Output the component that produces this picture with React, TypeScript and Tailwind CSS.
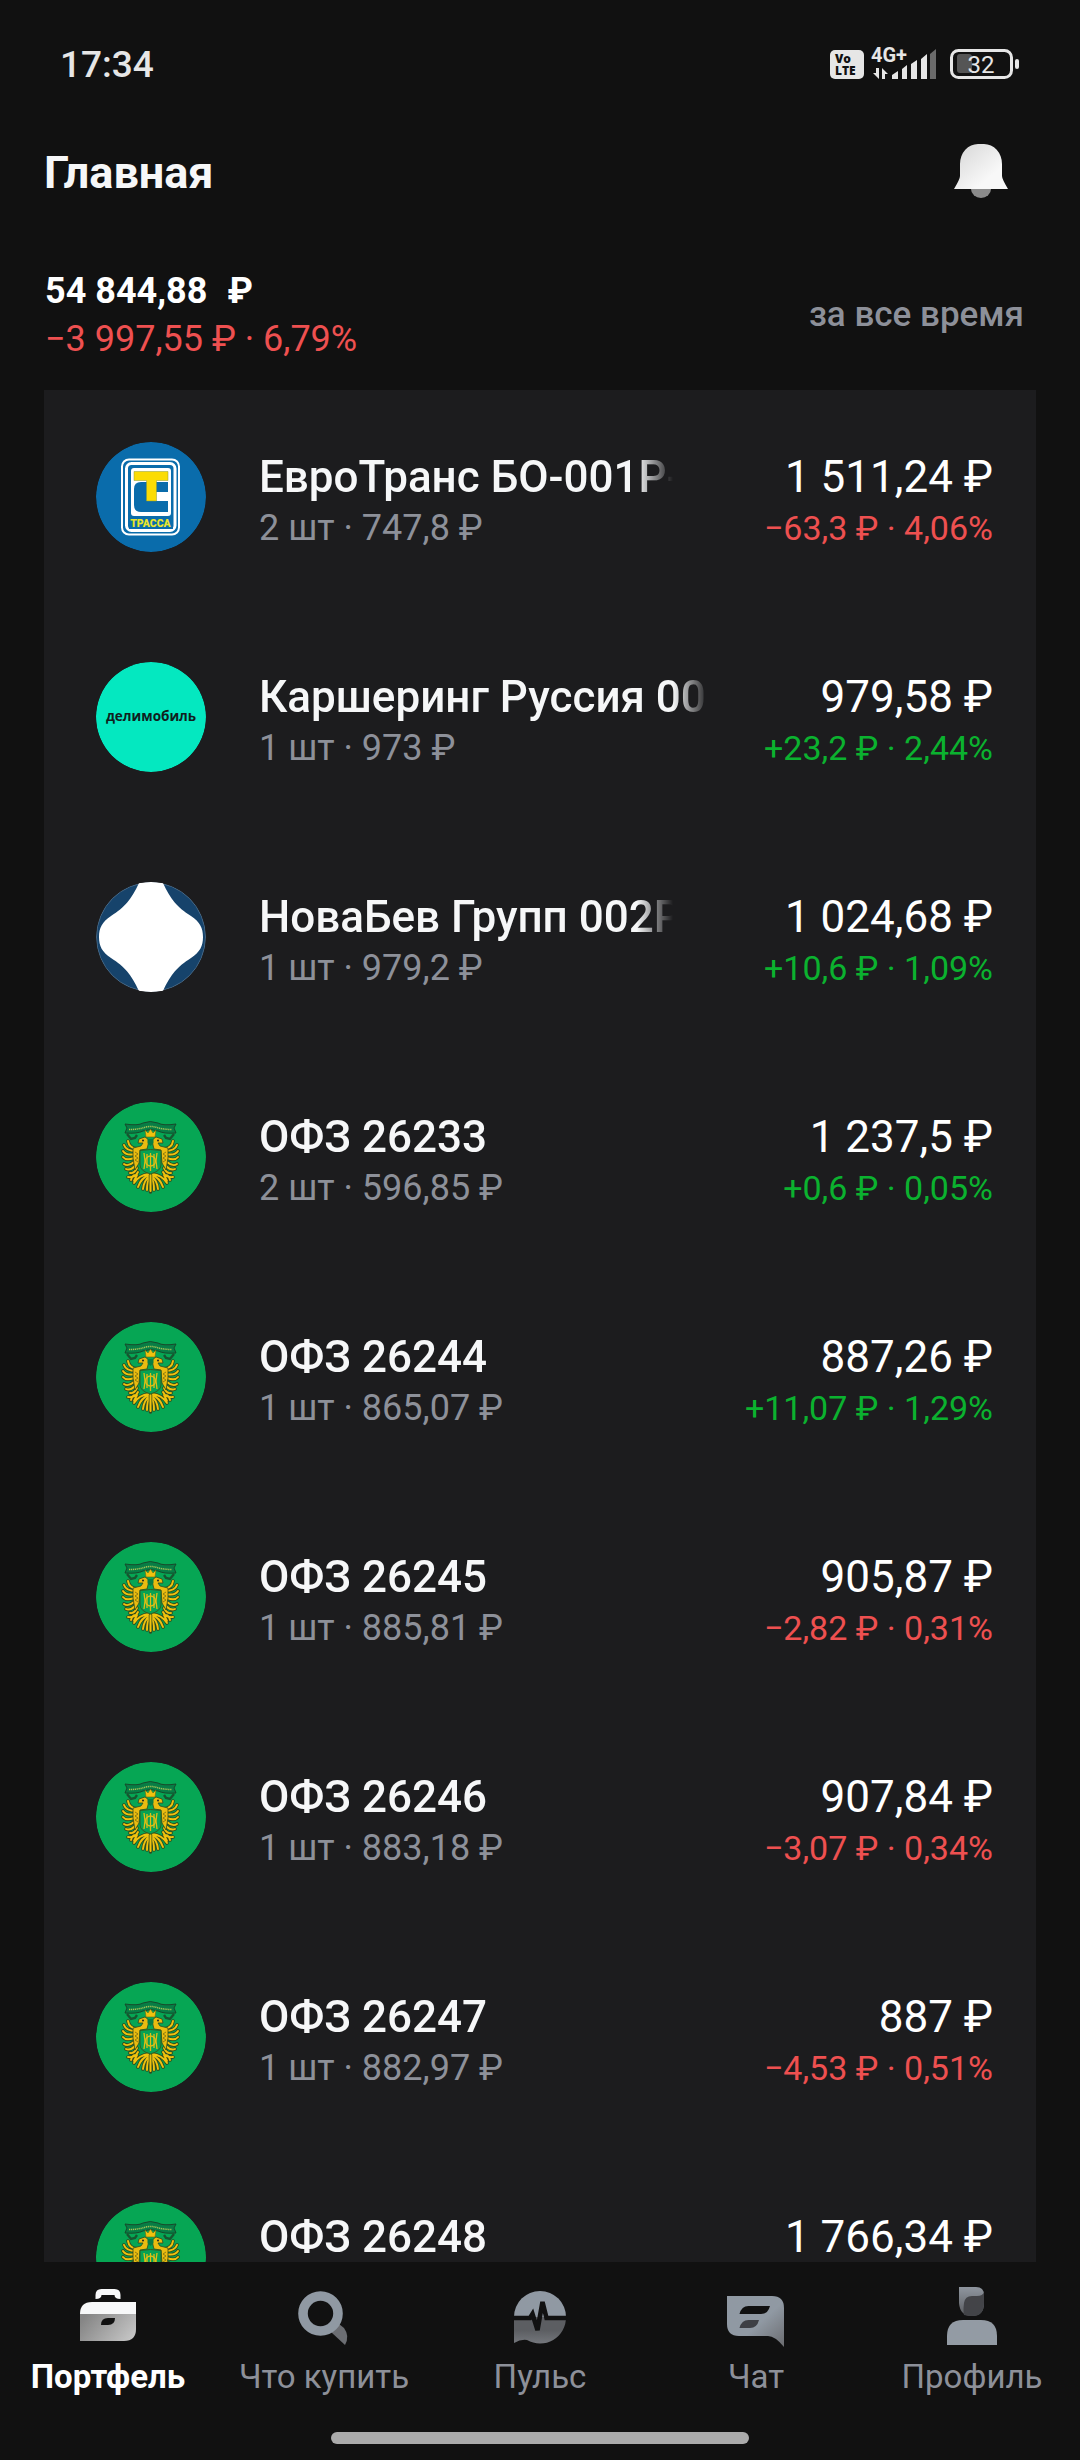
import type { ReactNode } from "react"

type Holding = {
    name: string
    info: string
    value: string
    change: string
    up: boolean
    logo: ReactNode
}

const TrassaLogo = () => (
    <svg viewBox="0 0 110 110" className="size-full">
        <circle cx="55" cy="55" r="55" fill="#0a6cab" />
        <rect x="26" y="17.5" width="57" height="75" rx="7" fill="none" stroke="#fff" strokeWidth="2" />
        <rect x="30.5" y="21.5" width="48.5" height="67" rx="5" fill="none" stroke="#fff" strokeWidth="3" />
        <rect x="35" y="26" width="40" height="48" rx="3" fill="#fff" />
        <path d="M72 40H45q-7 0-7 7v16q0 7 7 7h27V59H51v-8h21z" fill="#0a6cab" />
        <path d="M59 50h13v9H59z" fill="#fff" />
        <path d="M38 29.5h34v9H60.5V59h-10V38.5H38z" fill="#fbdc04" stroke="#8a9a3a" strokeWidth="0.5" />
        <rect x="33" y="75" width="44" height="12" fill="#0a6cab" />
        <text x="54.5" y="85" textAnchor="middle" fontFamily="Roboto, sans-serif" fontSize="10.5" fontWeight="900" fill="#e9e52c">ТРАССА</text>
    </svg>
)

const DelimobilLogo = () => (
    <svg viewBox="0 0 110 110" className="size-full">
        <circle cx="55" cy="55" r="55" fill="#04e8c0" />
        <text x="55" y="59" textAnchor="middle" fontFamily="Open Sans, sans-serif" fontSize="13.5" fontWeight="700" fill="#10201d">делимобиль</text>
    </svg>
)

const NovabevLogo = () => (
    <svg viewBox="0 0 110 110" className="size-full">
        <circle cx="55" cy="55" r="54.5" fill="#16436b" stroke="#5c7c99" strokeWidth="0.7" />
        <path d="M43 1q12-2 24 0c8 17 14 24 28 33 9 6 12 12 12 21s-3 15-12 21c-14 9-20 16-28 33q-12 2-24 0c-8-17-14-24-28-33C6 70 3 64 3 55s3-15 12-21C29 25 35 18 43 1z" fill="#fff" />
    </svg>
)

const feathers = "M41 47q-8-1-9-8M40 49q-10 0-12-6M39 52q-9 2-12-3M38 56q-8 3-11-1M38 60q-6 5-10 2M39 64q-5 5-9 3M41 66q-3 6-7 5"
const claws = "M42 70q-3 6-10 5M41 73q-2 4-3 6M40 73q-4 0-5 5"
const tail = "M53 72q-10 1-15 9M53 73q-8 3-11 12M54 74q-6 4-7 13M54 75q-3 4-3 13"

// one half of the eagle, mirrored for the other side
const EagleHalf = () => (
    <g>
        <path d={feathers + claws + tail} fill="none" stroke="#2f4a1e" strokeWidth="3.6" strokeLinecap="round" />
        <path d={feathers + claws + tail} fill="none" stroke="#f0c20d" strokeWidth="1.9" strokeLinecap="round" />
        <path d="M37 46l8-2 2-3-5 0 1-4 6-2 4 3-1 5-1 4-7 1-1 13-4 7-2-12z" fill="#eabb10" stroke="#2f4a1e" strokeWidth="0.8" />
        <path d="M39 50l3 2-3 2 3 2-3 2 3 2" fill="none" stroke="#7a6d12" strokeWidth="0.8" />
        <circle cx="47" cy="38.5" r="1" fill="#222" />
    </g>
)

const MinfinLogo = () => (
    <svg viewBox="0 0 110 110" className="size-full">
        <circle cx="55" cy="55" r="55" fill="#06a654" />
        <EagleHalf />
        <g transform="translate(109 0) scale(-1 1)"><EagleHalf /></g>
        <path d="M54.5 73v17" stroke="#2f4a1e" strokeWidth="3.5" strokeLinecap="round" />
        <path d="M54.5 73v16" stroke="#f0c20d" strokeWidth="2" strokeLinecap="round" />
        <path d="M44 48.5q10.5-2 21 0V63q0 6-10.500 9Q44 69 44 63z" fill="#07a253" stroke="#335c20" />
        <path d="M48 51l1 8-1 8M51 52v14M58 52v14M61 51l-1 8 1 8M54.5 51v18" fill="none" stroke="#e0be14" strokeWidth="1.3" />
        <circle cx="54.5" cy="59" r="5" fill="none" stroke="#e0be14" strokeWidth="1.3" />
        <path d="M31 32l4 5 4-1 2-3M78 32l-4 5-4-1-2-3" fill="none" stroke="#17562f" strokeWidth="2.4" />
        <path d="M29 22q13 2 18-1 7-3 15 0 5 3 18 1l-2 4 2 5q-12 1-18-2-7-3-15 0-6 3-18 2l2-5z" fill="#087d45" stroke="#174a2b" />
        <path d="M33 27.5q9 0 15-2 6.500-2 13 0 6 2 15 2" fill="none" stroke="#a8c255" strokeWidth="1.5" strokeDasharray="1.2 0.7" />
        <path d="M49 28l3 3 2.5-4 2.5 4 3-3-1 7h-9z" fill="#f0c20d" stroke="#6b6a12" strokeWidth="0.6" />
        <path d="M51.500 37h6v4l-3 3-3-3z" fill="#087d45" />
    </svg>
)

const holdings: Holding[] = [
    { name: "ЕвроТранс БО-001Р-", info: "2 шт · 747,8 ₽", value: "1 511,24 ₽", change: "−63,3 ₽ · 4,06%", up: false, logo: <TrassaLogo /> },
    { name: "Каршеринг Руссия 001", info: "1 шт · 973 ₽", value: "979,58 ₽", change: "+23,2 ₽ · 2,44%", up: true, logo: <DelimobilLogo /> },
    { name: "НоваБев Групп 002Р", info: "1 шт · 979,2 ₽", value: "1 024,68 ₽", change: "+10,6 ₽ · 1,09%", up: true, logo: <NovabevLogo /> },
    { name: "ОФЗ 26233", info: "2 шт · 596,85 ₽", value: "1 237,5 ₽", change: "+0,6 ₽ · 0,05%", up: true, logo: <MinfinLogo /> },
    { name: "ОФЗ 26244", info: "1 шт · 865,07 ₽", value: "887,26 ₽", change: "+11,07 ₽ · 1,29%", up: true, logo: <MinfinLogo /> },
    { name: "ОФЗ 26245", info: "1 шт · 885,81 ₽", value: "905,87 ₽", change: "−2,82 ₽ · 0,31%", up: false, logo: <MinfinLogo /> },
    { name: "ОФЗ 26246", info: "1 шт · 883,18 ₽", value: "907,84 ₽", change: "−3,07 ₽ · 0,34%", up: false, logo: <MinfinLogo /> },
    { name: "ОФЗ 26247", info: "1 шт · 882,97 ₽", value: "887 ₽", change: "−4,53 ₽ · 0,51%", up: false, logo: <MinfinLogo /> },
    { name: "ОФЗ 26248", info: "", value: "1 766,34 ₽", change: "", up: false, logo: <MinfinLogo /> },
]

const StatusBar = () => (
    <div className="flex h-[130px] shrink-0 items-center justify-between px-[60px] text-[#e6e6e6]">
        <span className="text-[37px] font-medium">17:34</span>
        <svg viewBox="0 -4 190 40" className="h-10 w-[190px]" fill="#e6e6e6" fontFamily="Roboto, sans-serif">
            <rect y="1" width="34" height="29" rx="5" />
            <g fill="#111" fontFamily="Open Sans, sans-serif" fontWeight="800">
                <text x="5" y="14" fontSize="12">Vo</text>
                <text x="5" y="26" fontSize="12">LTE</text>
            </g>
            <text x="41" y="13" fontSize="20" fontWeight="700">4G+</text>
            <path d="M46 19h3v11l-6-6h3zM52 30V19l6 6h-3v5z" />
            <path d="M62 30v-4l6-4v8zM72 30V20l5-4v14zM81 30V15l6-4v19zM91 30V10l6-5v25z" />
            <path d="M100 30V5l6-5v30z" fill="#6b6b6b" />
            <rect x="121.500" y="1.500" width="60" height="27" rx="7" fill="none" stroke="#e6e6e6" strokeWidth="3" />
            <rect x="127" y="5" width="15" height="19" rx="3" fill="#555" />
            <rect x="185" y="10" width="4" height="10" rx="2" />
            <text x="151" y="23.5" fontSize="24" textAnchor="middle">32</text>
        </svg>
    </div>
)

const BellIcon = () => (
    <svg viewBox="0 0 56 56" className="size-14">
        <defs>
            <linearGradient id="bell" x1="0" y1="0" x2="1" y2="1">
                <stop offset="0" stopColor="#d5d5d5" />
                <stop offset="0.7" stopColor="#f8f8f8" />
            </linearGradient>
        </defs>
        <path d="M18 46h20a10 9 0 0 1-20 0z" fill="#8b8b8b" />
        <path d="M7 21a18 20 0 0 1 18-20h6a18 20 0 0 1 18 20v12q0 3 6 13H1q6-10 6-13z" fill="url(#bell)" />
    </svg>
)

const HoldingRow = ({ item }: { item: Holding }) => (
    <li className="flex h-[220px] items-start gap-[53px] pt-[52px] pr-[43px] pl-[52px]">
        <div className="size-[110px] shrink-0 overflow-hidden rounded-full">{item.logo}</div>
        <div className="flex min-w-0 flex-1 flex-col gap-1 pt-[9px]">
            <div className="flex items-baseline gap-28 text-[44px] leading-[52px]">
                <h2 className="min-w-0 flex-1 overflow-hidden font-medium whitespace-nowrap text-[#f6f7f8] [mask-image:linear-gradient(to_left,transparent,black_36px)]">{item.name}</h2>
                <span className="shrink-0 text-white">{item.value}</span>
            </div>
            <div className="flex items-baseline justify-between leading-[42px]">
                <span className="text-4xl leading-[42px] text-[#8d9099]">{item.info}</span>
                <span className={item.up ? "text-[34px] text-[#0bb22f]" : "text-[34px] text-[#ee5050]"}>{item.change}</span>
            </div>
        </div>
    </li>
)

const PortfolioIcon = () => (
    <svg viewBox="0 0 64 64" className="size-16">
        <defs>
            <linearGradient id="bag" x1="0" y1="0.3" x2="1" y2="0.7">
                <stop offset="0" stopColor="#858585" />
                <stop offset="1" stopColor="#c4c4c4" />
            </linearGradient>
        </defs>
        <path d="M19.5 15v-4q0-6 6-6h13q6 0 6 6v4q-6 0-6-4h-13q0 4-6 4z" fill="#f7f8f9" />
        <path d="M4 30q0-12 12-12h44v12z" fill="#f7f8f9" />
        <path d="M4 30h56v15q0 12-12 12H4z" fill="url(#bag)" />
        <path d="M25 41q0-7 7-7h7q0 7-7 7z" fill="#111" />
    </svg>
)

const SearchIcon = () => (
    <svg viewBox="0 0 64 64" className="size-16">
        <path d="M47 40l5 4q6 8 1 17L39 48z" fill="#6c6e73" />
        <circle cx="28.5" cy="29.5" r="17.5" fill="#111" stroke="#9099a3" strokeWidth="9.6" />
    </svg>
)

const PulseIcon = () => (
    <svg viewBox="0 0 64 64" className="size-16">
        <defs>
            <linearGradient id="pulse" x1="0" y1="0" x2="0" y2="1">
                <stop offset="0.5" stopColor="#5c5e62" />
                <stop offset="1" stopColor="#74777c" />
            </linearGradient>
        </defs>
        <path d="M6 33a26 26 0 0 1 52 0z" fill="#9099a3" />
        <path d="M6 33h52a26 26 0 0 1-39 23q-6-1-13 3z" fill="url(#pulse)" />
        <path d="M4 34h18l2.5-4 5 16 5-28 4 16H60" fill="none" stroke="#111" strokeWidth="4.6" />
    </svg>
)

const ChatIcon = () => (
    <svg viewBox="0 0 64 64" className="size-16">
        <defs>
            <linearGradient id="chat" x1="0" y1="0" x2="1" y2="1">
                <stop offset="0.55" stopColor="#9099a3" />
                <stop offset="1" stopColor="#6b6c70" />
            </linearGradient>
        </defs>
        <path d="M3 12h45q12 0 12 12v39q-9-11-16-11H15Q3 52 3 40z" fill="url(#chat)" />
        <path d="M15.5 30q2-8 9-8H46q-2 8-9 8z" fill="#111" />
        <path d="M15.5 44q2-8 9-8H35q-2 8-9 8z" fill="#3e4045" />
    </svg>
)

const ProfileIcon = () => (
    <svg viewBox="0 0 64 64" className="size-16">
        <defs>
            <linearGradient id="head" x1="0" y1="0" x2="0" y2="1">
                <stop offset="0" stopColor="#8f969f" />
                <stop offset="1" stopColor="#5a5c60" />
            </linearGradient>
        </defs>
        <path d="M19 3h17q8 0 8 8v8q0 13-12 13T19 19z" fill="url(#head)" />
        <path d="M24 31q-1-4 0-12 1-7 8-7h5q6 0 7-4v11q0 13-12 13-5 0-8-1z" fill="#434448" />
        <path d="M7 61v-9q0-16 16-16h18q16 0 16 16v9z" fill="#939ba4" />
    </svg>
)

const tabs = [
    { label: "Портфель", icon: <PortfolioIcon />, active: true },
    { label: "Что купить", icon: <SearchIcon />, active: false },
    { label: "Пульс", icon: <PulseIcon />, active: false },
    { label: "Чат", icon: <ChatIcon />, active: false },
    { label: "Профиль", icon: <ProfileIcon />, active: false },
]

const TabBar = () => (
    <footer className="shrink-0 pt-[22px] pb-4">
        <nav className="grid grid-cols-5">
            {tabs.map((tab) => (
                <a key={tab.label} href="#" className="flex flex-col items-center gap-[9px] whitespace-nowrap">
                    {tab.icon}
                    <span className={tab.active ? "text-[33px] leading-10 font-bold text-white" : "text-[33px] leading-10 text-[#8d9099]"}>{tab.label}</span>
                </a>
            ))}
        </nav>
        <div className="mx-auto mt-[35px] h-3 w-[418px] rounded-full bg-[#ababab]" />
    </footer>
)

const App = () => {
    return (
        <div className="flex h-screen flex-col overflow-hidden bg-[#111111] font-[Roboto,sans-serif] text-white">
            <StatusBar />
            <header className="flex shrink-0 items-start justify-between pt-[13px] pr-[71px] pl-11">
                <h1 className="text-[45px] leading-[60px] font-bold text-[#f6f7f8]">Главная</h1>
                <button type="button" aria-label="Уведомления"><BellIcon /></button>
            </header>
            <section className="flex shrink-0 items-center justify-between pt-16 pr-14 pb-[27px] pl-[45px] text-4xl leading-[48px]">
                <div>
                    <p className="flex gap-5 leading-[48px] font-bold"><span>54 844,88</span><span>₽</span></p>
                    <p className="leading-[48px] text-[#ee5050]">−3 997,55 ₽ · 6,79%</p>
                </div>
                <button type="button" className="text-[35px] font-medium text-[#8d9099]">за все время</button>
            </section>
            <main className="mx-11 min-h-0 flex-1 overflow-hidden bg-[#1c1c1e]">
                <ul>
                    {holdings.map((item) => <HoldingRow key={item.name} item={item} />)}
                </ul>
            </main>
            <TabBar />
        </div>
    )
}

export default App
